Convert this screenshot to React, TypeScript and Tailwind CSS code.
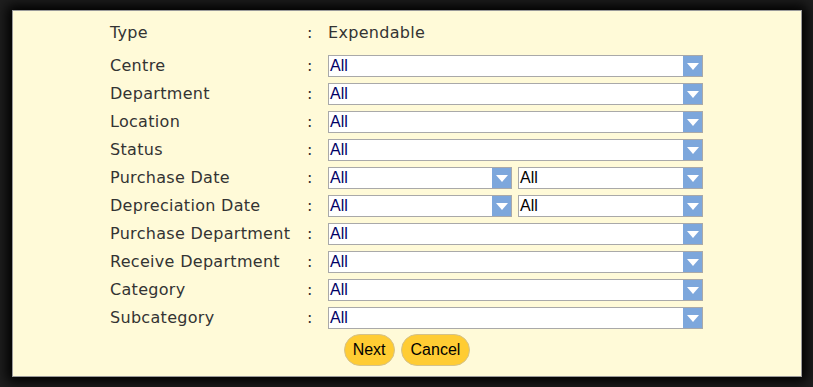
import { FC } from "react";

const rows: { label: string; split?: boolean }[] = [
  { label: "Centre" },
  { label: "Department" },
  { label: "Location" },
  { label: "Status" },
  { label: "Purchase Date", split: true },
  { label: "Depreciation Date", split: true },
  { label: "Purchase Department" },
  { label: "Receive Department" },
  { label: "Category" },
  { label: "Subcategory" },
];

const Select: FC<{ width: string; color?: string }> = ({ width, color }) => {
  return (
    <div className={`${width} h-[22px] flex border border-[#a9a9a9] bg-white`}>
      <span
        className={`flex-1 pl-[1px] text-[16px] leading-[20px] ${color ?? "text-black"}`}
        style={{ fontFamily: '"Liberation Sans", Arial, sans-serif' }}
      >
        All
      </span>
      <div className="w-[19px] h-full bg-[#7da7dc] flex items-center justify-center">
        <svg width="12" height="7" viewBox="0 0 12 7">
          <polygon points="0,0 12,0 6,7" fill="#ffffff" />
        </svg>
      </div>
    </div>
  );
};

const App: FC = () => {
  return (
    <div className="w-[813px] h-[387px] bg-[#1f1f1f] pt-[10px] pl-[12px] overflow-hidden">
      <div
        className="w-[790px] h-[367px] bg-[#fffad8] border border-[#9a9a9a] shadow-[0_0_12px_5px_#000] pl-[97px] pt-[11px] text-[#333333] text-[16px] tracking-[0.3px]"
        style={{ fontFamily: '"DejaVu Sans", Verdana, sans-serif' }}
      >
        <div className="flex items-center h-[22px]">
          <span className="w-[197px]">Type</span>
          <span className="w-[21px]">:</span>
          <span>Expendable</span>
        </div>
        <div className="flex flex-col gap-[6px] mt-[11px]">
          {rows.map((r) => (
            <div key={r.label} className="flex items-center h-[22px]">
              <span className="w-[197px] whitespace-nowrap">{r.label}</span>
              <span className="w-[21px]">:</span>
              {r.split ? (
                <div className="flex gap-[6px] tracking-normal">
                  <Select width="w-[184px]" color="text-[#000066]" />
                  <Select width="w-[185px]" />
                </div>
              ) : (
                <div className="tracking-normal">
                  <Select width="w-[375px]" color="text-[#000066]" />
                </div>
              )}
            </div>
          ))}
        </div>
        <div
          className="flex justify-center gap-[6px] mt-[5px] -ml-[97px] tracking-normal"
          style={{ fontFamily: '"Liberation Sans", Arial, sans-serif' }}
        >
          <button className="h-[32px] px-[8px] rounded-full bg-[#ffcc33] border border-[#d4c28a] text-black text-[16px]">
            Next
          </button>
          <button className="h-[32px] px-[9px] rounded-full bg-[#ffcc33] border border-[#d4c28a] text-black text-[16px]">
            Cancel
          </button>
        </div>
      </div>
    </div>
  );
};

export default App;
